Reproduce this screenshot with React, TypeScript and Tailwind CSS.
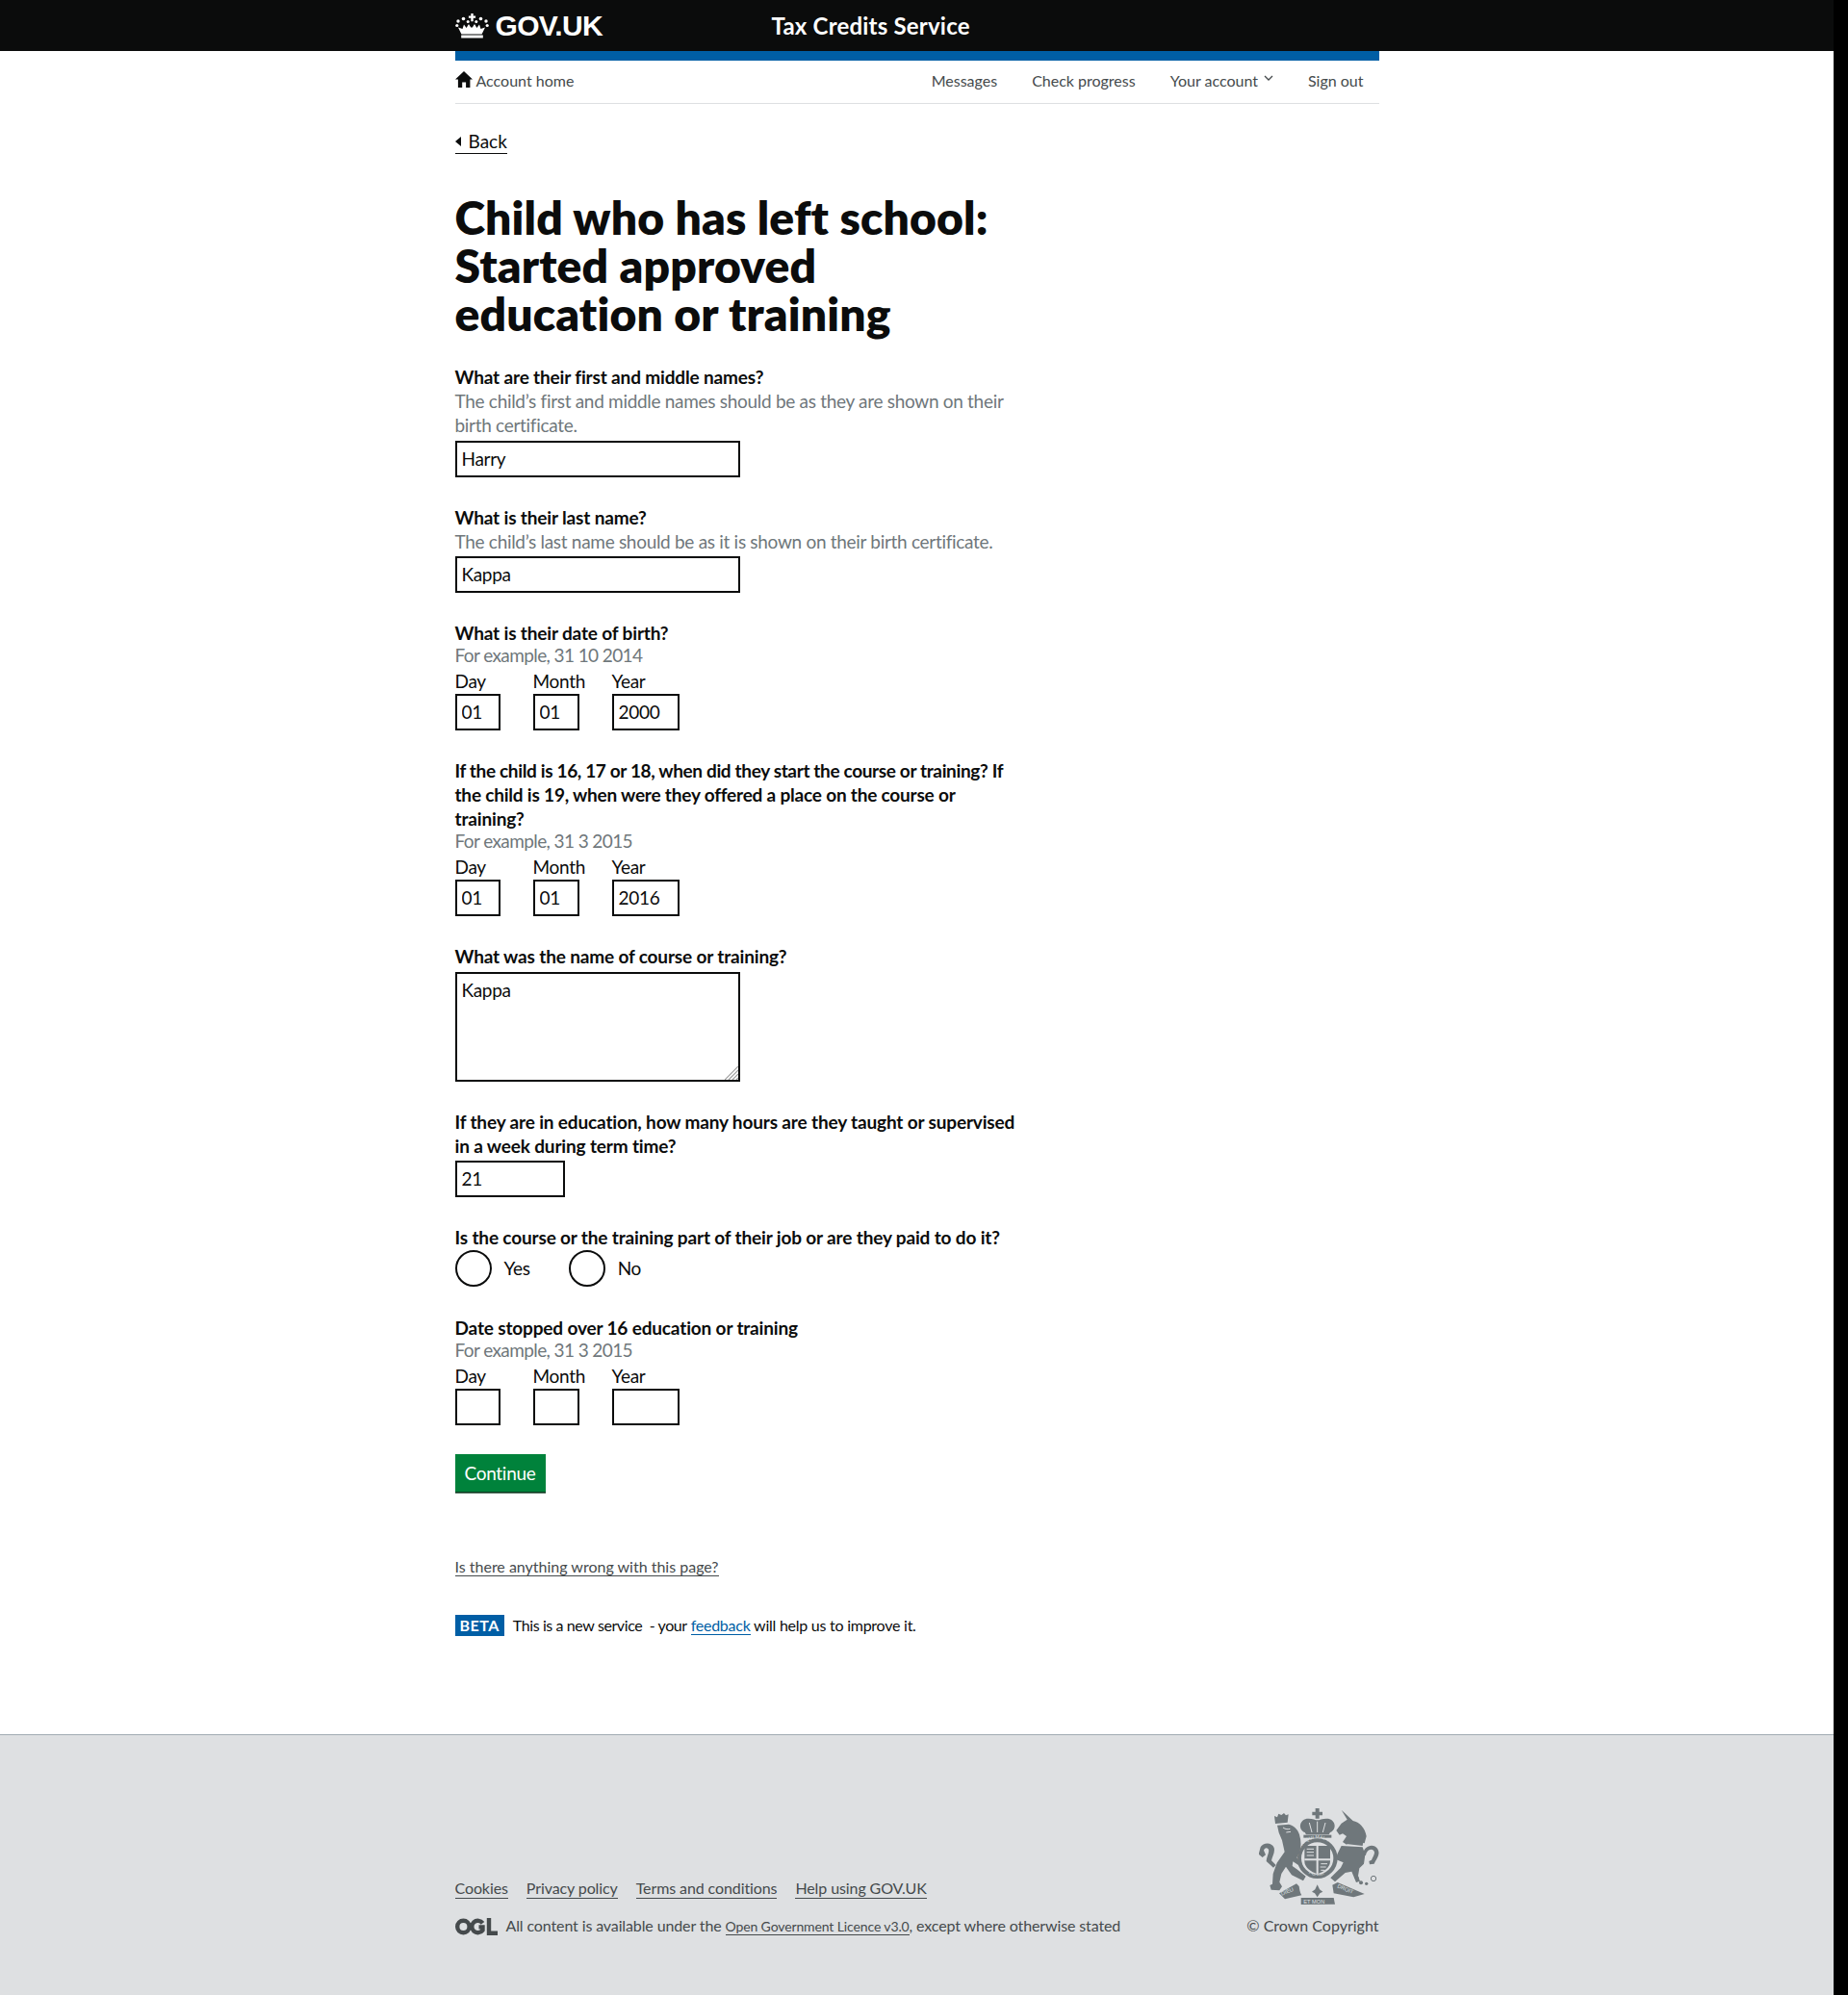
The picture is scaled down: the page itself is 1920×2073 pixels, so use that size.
import type { ReactNode } from 'react';

function CrownLogo() {
  return (
    <svg width="35" height="26" viewBox="0 0 35 26" className="text-white" fill="currentColor">
      <path d="M16.3 0h2.4v2.6h2.4v2.2h-2.4v3.4h-2.4V4.8h-2.4V2.6h2.4z" />
      <circle cx="3" cy="8" r="1.7" />
      <circle cx="8.5" cy="5.5" r="1.8" />
      <circle cx="13.2" cy="8.5" r="1.5" />
      <circle cx="21.8" cy="8.5" r="1.5" />
      <circle cx="26.5" cy="5.5" r="1.8" />
      <circle cx="32" cy="8" r="1.7" />
      <circle cx="1.8" cy="12.5" r="1.6" />
      <circle cx="33.2" cy="12.5" r="1.6" />
      <path d="M3 14.5l4.5 1.5 1.5-4.5 2.6 3.6 2.4-4 2.2 3.5h1.6l2.2-3.5 2.4 4 2.6-3.6 1.5 4.5 4.5-1.5-3.4 7H6.4z" />
      <path d="M6.2 22.5h22.6v3H6.2z" />
    </svg>
  );
}

function Crest() {
  const light = '#dee0e2';
  return (
    <svg width="125" height="100" viewBox="115 55 375 300" fill="#6f777b" className="mb-[12px]">
      <defs>
        <path id="garter" d="M240 232a61 61 0 1 1 114 0" />
        <path id="garter-low" d="M243 226a57 57 0 0 0 108 0" />
      </defs>
      {/* royal crown */}
      <path d="M291 55h12v11h10v11h-10v10h-12V77h-10V66h10z" />
      <path d="M258 130c-24-10-16-44 12-43 12 0 22 5 27 5 6 0 16-5 28-5 28-1 36 33 12 43l-4 7h-71z" />
      <path d="M272 100l8 30M297 96v34M322 100l-8 30" stroke={light} strokeWidth="3" fill="none" />
      <path d="M254 138h87v9h-87z" />
      {/* garter ring and shield */}
      <path
        fillRule="evenodd"
        d="M297 148a63 63 0 1 1 0 126a63 63 0 1 1 0-126zm0 13a50 50 0 1 0 0 100a50 50 0 1 0 0-100z"
      />
      <text fontSize="15" fill={light} fontFamily="Liberation Sans, sans-serif">
        <textPath href="#garter">HONI SOIT QUI MAL Y</textPath>
      </text>
      <text fontSize="15" fill={light} fontFamily="Liberation Sans, sans-serif">
        <textPath href="#garter-low" startOffset="30%">PENSE</textPath>
      </text>
      <path d="M257 172h80v48c0 20-20 33-40 40-20-7-40-20-40-40z" />
      <path d="M294 172h6v88h-6zM257 212h80v6h-80z" fill={light} />
      <path d="M264 182h22M264 192h22M264 202h22M308 228h20M306 238h18M308 248h12" stroke={light} strokeWidth="3" />
      {/* lion */}
      <path d="M166 103l-3-24 9 4 4-11 9 4 8-6 6 7 8-3-3 25z" />
      <path d="M172 108l36-3c14 3 28 14 33 32 6 20 6 40 0 56l-8 16 12 16-6 8-18-12-2 14 14 10 28 22-8 14-36-18-18-26-14 22-6 26 8 14-8 12-26-2-4-14 8-4 2-32 12-34 24-34-8-36-10-24z" />
      <path d="M120 176c8-16 36-16 42 2 4 14-6 28-8 40l14 14-8 8-22-20c0-14 12-30 6-38-6-6-12-2-14 4l6 14-10 8-12-10z" />
      <path d="M190 115c8 6 16 6 22 4M200 130l14-2" stroke={light} strokeWidth="3" fill="none" />
      {/* unicorn */}
      <path d="M372 60l36 34c20 4 38 22 42 48l-6 22-44-8-12 12-12-8 12-18-12-8-10 4-10-14 16-22 18-12z" />
      <path d="M388 152l52 8-2 12-52-6z" />
      <path d="M372 172l66 4 8 24-4 28-14 14-4 24 6 16-12 4-14-34-20 4-32 28-14-12 32-32 8-16-24-10 6-18z" />
      <path d="M440 200c-2-22 26-38 42-22 16 18-2 36-8 50l-14 2-2-10 8-4c4-10 14-22 6-30-10-8-22 2-24 16z" />
      <circle cx="420" cy="272" r="6" />
      <circle cx="433" cy="287" r="6" />
      <circle cx="450" cy="290" r="5" />
      <circle cx="472" cy="274" r="8" fill="none" stroke="#6f777b" strokeWidth="3" />
      {/* motto ribbon */}
      <path d="M178 320l54-30 8 8c2 10 2 18 8 28l-52 12z" />
      <path d="M246 334l102 0 4 20-106 1z" />
      <path d="M344 294l16-8 84 36-34 10-62-12z" />
      <path d="M297 293l7 15 10 7-9 5-8 12-8-12-9-5 10-7z" />
      <text x="186" y="327" fontSize="17" fill={light} fontFamily="Liberation Sans, sans-serif" transform="rotate(-22 186 327)">DIEU</text>
      <text x="254" y="351" fontSize="17" fill={light} fontFamily="Liberation Sans, sans-serif">ET MON</text>
      <text x="358" y="302" fontSize="17" fill={light} fontFamily="Liberation Sans, sans-serif" transform="rotate(22 358 302)">DROIT</text>
    </svg>
  );
}

function OglLogo() {
  return (
    <svg width="44" height="18" viewBox="0 0 44 18" fill="none" stroke="#454a4c" strokeWidth="4.4">
      <circle cx="8.4" cy="9" r="6.2" />
      <path d="M28.5 5.4a6.2 6.2 0 1 0 0 7.2V9.4h-4" />
      <path d="M35 0v15.8h9" />
    </svg>
  );
}

function Label({ children }: { children: ReactNode }) {
  return <div className="-mt-[1px] pb-[1px] font-bold tracking-[-0.15px] text-[#0b0c0c]">{children}</div>;
}

function Hint({ children, tight }: { children: ReactNode; tight?: boolean }) {
  return (
    <div className={tight ? '-mt-[3px] pb-[3px] tracking-[-0.6px] text-[#6f777b]' : '-mt-[1px] pb-[1px] text-[#6f777b]'}>
      {children}
    </div>
  );
}

const inputBox = 'block h-[38px] border-2 border-[#0b0c0c] bg-white px-[5px] pb-[2px] text-[#0b0c0c] outline-none';

function DateFields({ day, month, year }: { day?: string; month?: string; year?: string }) {
  return (
    <div className="flex">
      <label className="w-[81px]">
        <span className="-mt-[1px] block pb-[1px]">Day</span>
        <input defaultValue={day} className={`${inputBox} w-[47px]`} />
      </label>
      <label className="w-[82px]">
        <span className="-mt-[1px] block pb-[1px]">Month</span>
        <input defaultValue={month} className={`${inputBox} w-[48px]`} />
      </label>
      <label>
        <span className="-mt-[1px] block pb-[1px]">Year</span>
        <input defaultValue={year} className={`${inputBox} w-[70px]`} />
      </label>
    </div>
  );
}

function Radio({ name }: { name: string }) {
  return (
    <label className="flex items-center gap-[13px]">
      <input type="radio" name="paid" className="m-0 h-[38px] w-[38px] appearance-none rounded-full border-2 border-[#0b0c0c]" />
      <span className="pb-[2px]">{name}</span>
    </label>
  );
}

export default function App() {
  return (
    <div className="min-h-[2073px] bg-black font-['Lato',sans-serif] text-[19px] leading-[25px] tracking-[-0.3px] text-[#0b0c0c]">
      <div className="flex min-h-[2073px] w-[1905px] flex-col bg-white">
        {/* Header */}
        <header className="h-[53px] bg-[#0b0c0c] text-white">
          <div className="mx-auto flex h-full w-[960px] items-center">
            <CrownLogo />
            <span className="ml-[7px] w-[287px] font-['Liberation_Sans',sans-serif] text-[30px] font-bold tracking-[-0.7px]">GOV.UK</span>
            <span className="text-[24px] font-bold tracking-[0.2px]">Tax Credits Service</span>
          </div>
        </header>

        <div className="mx-auto w-[960px] flex-1">
          <div className="h-[10px] bg-[#005ea5]" />

          {/* Account nav */}
          <nav className="flex h-[45px] items-center justify-between border-b border-[#dee0e2] pr-[16px] pb-[3px] text-[16px] tracking-normal text-[#454a4c]">
            <span className="flex items-center gap-[4px]">
              <svg width="18" height="17" viewBox="0 0 18 17" fill="#0b0c0c" className="mb-[2px]">
                <path d="M9 0l9 8.5h-2.6V17h-4.3v-5.5H7.2V17H2.9V8.5H0z" />
              </svg>
              Account home
            </span>
            <span className="flex items-center gap-[36px]">
              <span>Messages</span>
              <span>Check progress</span>
              <span className="flex items-center gap-[6px]">
                Your account
                <svg width="10" height="7" viewBox="0 0 10 7" fill="none" stroke="#454a4c" strokeWidth="1.3" className="mb-[4px]">
                  <path d="M1 1l4 4 4-4" />
                </svg>
              </span>
              <span>Sign out</span>
            </span>
          </nav>

          {/* Back link */}
          <a href="#" className="mt-[27px] flex w-fit items-center border-b border-[#0b0c0c] text-[19px] leading-[24px] tracking-normal">
            <svg width="14" height="10" viewBox="0 0 14 10" fill="#0b0c0c">
              <path d="M6 0v10L0 5z" />
            </svg>
            Back
          </a>

          <h1 className="mt-[41px] w-[640px] text-[48px] leading-[50px] font-extrabold tracking-[0.15px]">
            Child who has left school:
            <br />
            Started approved
            <br />
            education or training
          </h1>

          <form className="mt-[29px] flex w-[640px] flex-col gap-[30px]">
            <div>
              <Label>What are their first and middle names?</Label>
              <Hint>
                The child’s first and middle names should be as they are shown on their
                <br />
                birth certificate.
              </Hint>
              <input defaultValue="Harry" className={`${inputBox} mt-[3px] w-[296px]`} />
            </div>

            <div>
              <Label>What is their last name?</Label>
              <Hint>The child’s last name should be as it is shown on their birth certificate.</Hint>
              <input defaultValue="Kappa" className={`${inputBox} mt-[2px] w-[296px]`} />
            </div>

            <div>
              <Label>What is their date of birth?</Label>
              <Hint tight>For example, 31 10 2014</Hint>
              <DateFields day="01" month="01" year="2000" />
            </div>

            <div>
              <Label>
                <span className="tracking-[-0.35px]">If the child is 16, 17 or 18, when did they start the course or training? If</span>
                <br />
                <span className="tracking-[-0.2px]">the child is 19, when were they offered a place on the course or</span>
                <br />
                training?
              </Label>
              <Hint tight>For example, 31 3 2015</Hint>
              <DateFields day="01" month="01" year="2016" />
            </div>

            <div>
              <Label>What was the name of course or training?</Label>
              <div className="relative mt-[3px] w-[296px]">
                <textarea
                  defaultValue="Kappa"
                  className="block h-[114px] w-full resize-none border-2 border-[#0b0c0c] px-[5px] py-[4px] outline-none"
                />
                <svg width="14" height="14" viewBox="0 0 14 14" stroke="#9a9a9a" strokeWidth="1.2" className="pointer-events-none absolute right-[2px] bottom-[2px]">
                  <path d="M0 14L14 0M4 14L14 4M8 14l6-6M12 14l2-2" />
                </svg>
              </div>
            </div>

            <div>
              <Label>
                If they are in education, how many hours are they taught or supervised
                <br />
                in a week during term time?
              </Label>
              <input defaultValue="21" className={`${inputBox} mt-[2px] w-[114px]`} />
            </div>

            <div>
              <Label>Is the course or the training part of their job or are they paid to do it?</Label>
              <div className="mb-[1px] flex gap-[40px]">
                <Radio name="Yes" />
                <Radio name="No" />
              </div>
            </div>

            <div>
              <Label>Date stopped over 16 education or training</Label>
              <Hint tight>For example, 31 3 2015</Hint>
              <DateFields />
            </div>

            <button type="button" className="h-[40px] w-[94px] bg-[#00823b] pb-[2px] text-white shadow-[inset_0_-1px_0_#0d3a20,0_1px_0_#5f7f6d]">
              Continue
            </button>
          </form>

          <a href="#" className="mt-[67px] block w-fit border-b border-[#454a4c] text-[16px] leading-[19px] tracking-normal text-[#454a4c]">
            Is there anything wrong with this page?
          </a>

          <div className="mt-[40px] flex items-center gap-[9px] text-[16px] leading-[22px] tracking-[-0.25px]">
            <span className="h-[22px] bg-[#005ea5] px-[5px] font-bold tracking-[0.5px] text-white">BETA</span>
            <span>
              <span className="tracking-[-0.4px]">This is a new service &nbsp;- your</span>{' '}
              <a href="#" className="border-b border-[#005ea5] text-[#005ea5]">
                feedback
              </a>{' '}
              will help us to improve it.
            </span>
          </div>
        </div>

        {/* Footer */}
        <footer className="h-[271px] border-t border-[#a1acb2] bg-[#dee0e2] text-[16px] tracking-[-0.12px] text-[#454a4c]">
          <div className="mx-auto flex h-full w-[960px] items-end justify-between pb-[61px]">
            <div>
              <div className="flex gap-[19px] leading-[20px] tracking-[-0.1px]">
                <a href="#" className="border-b border-[#454a4c]">Cookies</a>
                <a href="#" className="border-b border-[#454a4c]">Privacy policy</a>
                <a href="#" className="border-b border-[#454a4c]">Terms and conditions</a>
                <a href="#" className="border-b border-[#454a4c]">Help using GOV.UK</a>
              </div>
              <div className="mt-[18px] flex items-center gap-[9px] leading-[20px]">
                <OglLogo />
                <span>
                  All content is available under the{' '}
                  <a href="#" className="border-b border-[#454a4c] text-[14px]">Open Government Licence v3.0</a>, except where otherwise stated
                </span>
              </div>
            </div>
            <div className="flex flex-col items-end tracking-normal">
              <Crest />
              <span className="pb-[1px] leading-[20px]">© Crown Copyright</span>
            </div>
          </div>
        </footer>
      </div>
    </div>
  );
}
